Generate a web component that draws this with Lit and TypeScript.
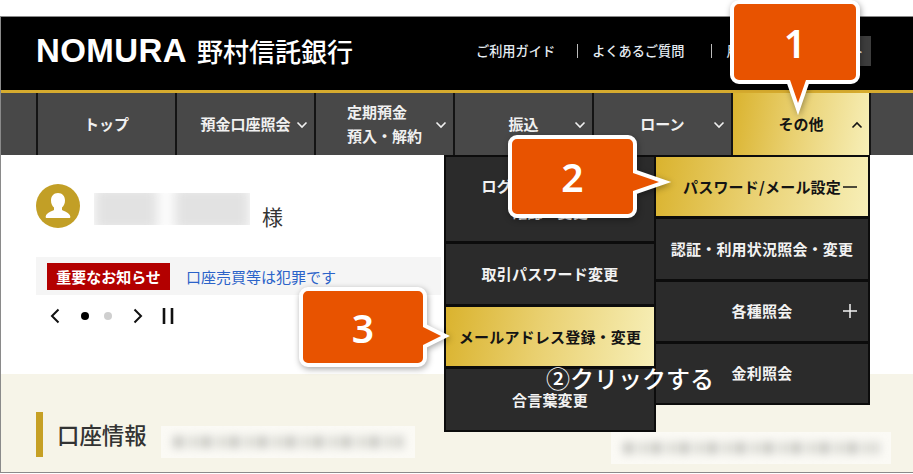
import { LitElement, html, css, svg } from "lit";
import { customElement } from "lit/decorators.js";

const chevron = (up = false) => html`
  <svg class="chev" width="12" height="8" viewBox="0 0 12 8">
    <polyline points=${up ? "1.5,6.5 6,2 10.5,6.5" : "1.5,1.5 6,6 10.5,1.5"} fill="none" stroke="currentColor" stroke-width="1.6" />
  </svg>
`;

const body = (w: number, h: number, right: string, bottom: string) =>
  `M5 0 H${w - 5} a5 5 0 0 1 5 5 ${right} V${h - 5} a5 5 0 0 1 -5 5 ${bottom} H5 a5 5 0 0 1 -5 -5 V5 a5 5 0 0 1 5 -5 Z`;

const callout = (n: number, cls: string, d: string) => html`
  <div class="callout ${cls}">
    <svg class="callout-shape" width="100%" height="100%">
      ${svg`<path d=${d} fill="#e85300" stroke="#fff" stroke-width="8" paint-order="stroke" stroke-linejoin="miter" stroke-miterlimit="8" />`}
    </svg>
    <span class="callout-num">${n}</span>
  </div>
`;

@customElement("app-root")
export class AppRoot extends LitElement {
  static override styles = css`
    :host {
      display: block;
      width: 913px;
      height: 474px;
      position: relative;
      overflow: hidden;
      background: #fff;
      font-family: "Noto Sans CJK JP", "Noto Sans", sans-serif;
    }
    .frame {
      box-sizing: border-box;
      margin-top: 16px;
      position: absolute;
      top: 0;
      left: 0;
      width: 913px;
      height: 457px;
      border: 1px solid #8a8a8a;
      border-right: none;
      display: flex;
      flex-direction: column;
    }
    header {
      box-sizing: border-box;
      height: 76px;
      flex: none;
      background: #000;
      border-bottom: 3px solid #d6ab2e;
      display: flex;
      align-items: center;
      padding: 0 42px 6px 35px;
      color: #fff;
    }
    .logo {
      font-family: "Liberation Sans", sans-serif;
      font-weight: 700;
      font-size: 33px;
      letter-spacing: 0.4px;
      width: 161px;
      flex: none;
      line-height: 1;
    }
    .bank {
      font-size: 26px;
      font-weight: 500;
      line-height: 1;
      flex: none;
    }
    .links {
      margin-left: auto;
      display: flex;
      align-items: center;
      font-size: 13.2px;
      font-weight: 500;
      color: #e6edf3;
    }
    .links a {
      padding: 0 14px;
      border-left: 1px solid #bbb;
      line-height: 14px;
    }
    .links a:first-child {
      border-left: none;
      padding-left: 0;
      padding-right: 22px;
    }
    .links a:nth-child(2) {
      padding-right: 27px;
    }
    .logout {
      width: 80px;
      height: 30px;
      margin-left: 11px;
      background: #3d3d3d;
      display: flex;
      align-items: center;
      justify-content: center;
      font-size: 13px;
      color: #eee;
    }
    nav {
      box-sizing: border-box;
      height: 62px;
      flex: none;
      background: #484848;
      display: flex;
      padding-left: 35px;
    }
    .nav-item {
      box-sizing: border-box;
      width: 139px;
      flex: none;
      border-left: 2px solid #141414;
      position: relative;
      display: flex;
      align-items: center;
      justify-content: center;
      color: #f0f0f0;
      font-size: 15px;
      font-weight: 700;
      line-height: 24px;
      text-align: center;
    }
    .nav-item .chev {
      position: absolute;
      right: 6px;
      top: 28px;
    }
    .nav-item .two-line {
      text-align: left;
    }
    .nav-item.end {
      border-right: 2px solid #141414;
      width: 140px;
    }
    .gold {
      background: linear-gradient(100deg, #dab32e 0%, #e9d070 45%, #f7efb8 100%);
      color: #141414;
    }
    main {
      box-sizing: border-box;
      height: 219px;
      flex: none;
      padding: 29px 0 0 35px;
      background: #fff;
    }
    .greeting {
      display: flex;
      align-items: center;
      height: 44px;
    }
    .avatar {
      width: 44px;
      height: 44px;
      flex: none;
    }
    .name-blur {
      width: 156px;
      height: 32px;
      margin: 6px 0 0 14px;
      display: flex;
      gap: 16px;
      overflow: hidden;
    }
    .name-blur i {
      display: block;
      height: 44px;
      margin-top: -6px;
      background: #e2e2e2;
      filter: blur(6px);
    }
    .name-blur i:first-child {
      width: 68px;
    }
    .name-blur i:last-child {
      width: 80px;
    }
    .sama {
      font-size: 21px;
      color: #333;
      margin: 20px 0 0 12px;
      line-height: 1;
    }
    .notice {
      box-sizing: border-box;
      width: 405px;
      height: 38px;
      margin-top: 29px;
      background: #f5f5f5;
      display: flex;
      align-items: center;
      padding-left: 11px;
      font-size: 15px;
    }
    .badge {
      width: 123px;
      height: 27px;
      display: flex;
      align-items: center;
      justify-content: center;
      background: #b30000;
      color: #fff;
      font-weight: 700;
    }
    .notice-link {
      margin-left: 16px;
      color: #2b63c9;
    }
    .controls {
      display: flex;
      align-items: center;
      height: 20px;
      margin-top: 11px;
      padding-left: 13px;
    }
    .dot {
      width: 8px;
      height: 8px;
      border-radius: 50%;
      background: #000;
      margin-left: 20px;
    }
    .dot.off {
      background: #cfcfcf;
      margin-left: 15px;
    }
    .next {
      margin-left: 20px;
    }
    .pause {
      margin-left: 18px;
    }
    .lower {
      flex: 1;
      background: #f6f4e8;
      padding: 38px 0 0 35px;
      display: flex;
      align-items: flex-start;
    }
    .bar {
      width: 7px;
      height: 45px;
      background: #c6a024;
      flex: none;
    }
    .lower h2 {
      margin: 6px 0 0 14px;
      font-size: 22.4px;
      font-weight: 500;
      line-height: 32px;
      color: #333;
    }
    .blur-box {
      box-sizing: border-box;
      height: 32px;
      background: #fbfaf5;
      padding: 10px 12px;
      overflow: hidden;
      flex: none;
    }
    .blur-box i {
      display: block;
      height: 12px;
      background: repeating-linear-gradient(90deg, #c9c9c4 0 11px, transparent 11px 15px, #dcdcd6 15px 26px, transparent 26px 28px);
      filter: blur(4px);
    }
    .blur-a {
      width: 254px;
      margin: 14px 0 0 14px;
    }
    .blur-b {
      width: 280px;
      margin: 20px 0 0 196px;
    }
    .menu {
      position: absolute;
      box-sizing: border-box;
      display: grid;
      gap: 3px;
      padding: 2px;
      background: #0c0c0c;
      color: #f2f2f2;
      font-size: 15px;
      font-weight: 700;
      letter-spacing: 0.2px;
      line-height: 26px;
      text-align: center;
    }
    .menu-a {
      left: 444px;
      top: 155px;
      width: 212px;
      height: 277px;
      grid-template-rows: 84px 60px 59px 1fr;
    }
    .menu-b {
      left: 654px;
      top: 155px;
      width: 216px;
      height: 250px;
      grid-template-rows: 1fr 1fr 1fr 1fr;
    }
    .menu-item {
      position: relative;
      display: flex;
      align-items: center;
      justify-content: center;
      background: #2b2b2b;
    }
    .menu-item.gold {
      background: linear-gradient(100deg, #dab32e 0%, #e9d070 45%, #f7efb8 100%);
      color: #141414;
    }
    .menu-item .sign {
      position: absolute;
      right: 11px;
      top: 50%;
      margin-top: -7px;
    }
    .click-note {
      position: absolute;
      left: 546px;
      top: 360px;
      font-size: 24px;
      font-weight: 500;
      line-height: 36px;
      color: #fff;
      white-space: nowrap;
    }
    .callout {
      position: absolute;
    }
    .callout-shape {
      position: absolute;
      inset: 0;
      overflow: visible;
      filter: drop-shadow(1px 2px 3px rgba(0, 0, 0, 0.35));
    }
    .callout-num {
      position: absolute;
      inset: 0;
      display: flex;
      align-items: center;
      justify-content: center;
      color: #fff;
      font-family: "Noto Sans", sans-serif;
      font-size: 39px;
      font-weight: 600;
      line-height: 1;
    }
    .c1 {
      left: 734px;
      top: 4px;
      width: 122px;
      height: 76px;
    }
    .c2 {
      left: 512px;
      top: 139px;
      width: 121px;
      height: 75px;
    }
    .c3 {
      left: 303px;
      top: 291px;
      width: 120px;
      height: 72px;
    }
  `;

  override render() {
    const sign = (plus: boolean) => html`
      <svg class="sign" width="14" height="14" viewBox="0 0 14 14">
        <path d=${plus ? "M0 7H14M7 0V14" : "M0 7H14"} stroke="currentColor" stroke-width="1.5" fill="none" />
      </svg>
    `;
    return html`
      <div class="frame">
        <header>
          <div class="logo">NOMURA</div>
          <div class="bank">野村信託銀行</div>
          <div class="links">
            <a>ご利用ガイド</a>
            <a>よくあるご質問</a>
            <a>用語集</a>
            <div class="logout">ログアウト</div>
          </div>
        </header>
        <nav>
          <div class="nav-item">トップ</div>
          <div class="nav-item"><span>預金口座照会</span>${chevron()}</div>
          <div class="nav-item"><span class="two-line">定期預金<br />預入・解約</span>${chevron()}</div>
          <div class="nav-item"><span>振込</span>${chevron()}</div>
          <div class="nav-item"><span>ローン</span>${chevron()}</div>
          <div class="nav-item end gold"><span>その他</span>${chevron(true)}</div>
        </nav>
        <main>
          <div class="greeting">
            <svg class="avatar" viewBox="0 0 44 44">
              <circle cx="22" cy="22" r="22" fill="#c29f26" />
              <path d="M22 9c-4.500 0-7 3.400-7 7.500 0 3 1.200 5.500 3 7v2.500c-2 1.500-7.500 2.300-8.300 6.500-.2 1 .3 1.500 1.300 1.500h22c1 0 1.500-.5 1.300-1.500-.8-4.200-6.300-5-8.300-6.500v-2.500c1.800-1.500 3-4 3-7 0-4.100-2.500-7.500-7-7.500z" fill="#fff" />
            </svg>
            <div class="name-blur"><i></i><i></i></div>
            <span class="sama">様</span>
          </div>
          <div class="notice">
            <span class="badge">重要なお知らせ</span>
            <span class="notice-link">口座売買等は犯罪です</span>
          </div>
          <div class="controls">
            <svg width="12" height="16" viewBox="0 0 12 16"><polyline points="9.500,1.500 3,8 9.500,14.500" fill="none" stroke="#111" stroke-width="2" /></svg>
            <span class="dot"></span>
            <span class="dot off"></span>
            <svg class="next" width="12" height="16" viewBox="0 0 12 16"><polyline points="2.500,1.500 9,8 2.500,14.500" fill="none" stroke="#111" stroke-width="2" /></svg>
            <svg class="pause" width="12" height="16" viewBox="0 0 12 16"><path d="M2 0V16M10 0V16" stroke="#111" stroke-width="2.600" fill="none" /></svg>
          </div>
        </main>
        <section class="lower">
          <span class="bar"></span>
          <h2>口座情報</h2>
          <div class="blur-box blur-a"><i></i></div>
          <div class="blur-box blur-b"><i></i></div>
        </section>
      </div>

      <div class="menu menu-a">
        <div class="menu-item"><span>ログインパスワード<br />確認・変更</span></div>
        <div class="menu-item">取引パスワード変更</div>
        <div class="menu-item gold">メールアドレス登録・変更</div>
        <div class="menu-item">合言葉変更</div>
      </div>
      <div class="menu menu-b">
        <div class="menu-item gold">パスワード/メール設定${sign(false)}</div>
        <div class="menu-item">認証・利用状況照会・変更</div>
        <div class="menu-item">各種照会${sign(true)}</div>
        <div class="menu-item">金利照会</div>
      </div>
      <div class="click-note">②クリックする</div>

      ${callout(1, "c1", body(122, 76, "", "H72 L64 99 L56 76"))}
      ${callout(2, "c2", body(121, 75, "V34 L147 43 L121 52", ""))}
      ${callout(3, "c3", body(120, 72, "V36 L138 45 L120 54", ""))}
    `;
  }
}
